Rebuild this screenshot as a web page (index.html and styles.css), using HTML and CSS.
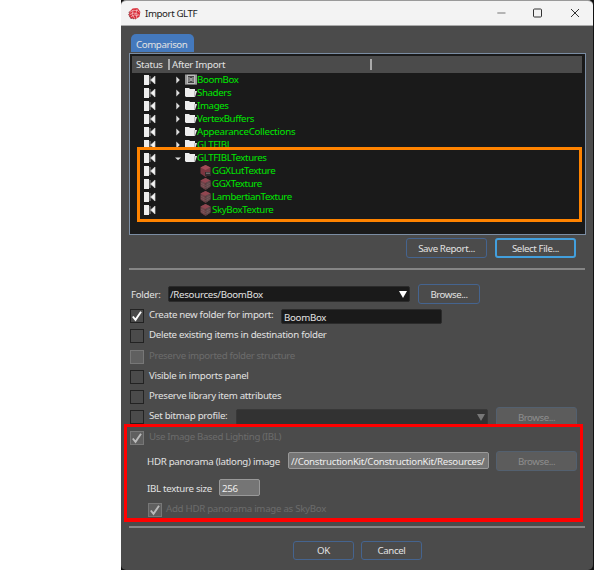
FILE: index.html
```
<!DOCTYPE html>
<html lang="en">
<head>
<meta charset="utf-8">
<title>Import GLTF</title>
<link rel="stylesheet" href="styles.css">
</head>
<body>
<svg class="defs" width="0" height="0" aria-hidden="true">
  <symbol id="state" viewBox="0 0 12 10"><path d="M0 0h5v10H0z" fill="#eee"/><path d="M6 1v8M11 1v8L6.5 5z" stroke="#ccc" stroke-width=".7" fill="#f4f4f4"/></symbol>
  <symbol id="closed" viewBox="0 0 8 8"><path d="M2.3.6 5.8 4 2.3 7.4z" fill="#ddd"/></symbol>
  <symbol id="open" viewBox="0 0 8 8"><path d="M1 3.5h6L4 6.3z" fill="#ddd"/></symbol>
  <symbol id="folder" viewBox="0 0 12 11"><path d="M0 1h4l1 1h5v2h2l-2 6H1L0 9z" fill="#eee"/><path d="M9.7 9.8V4" stroke="#777" stroke-width=".5"/></symbol>
  <symbol id="film" viewBox="0 0 12 11"><path d="M0 .5h12v10H0z" fill="#bbb"/><path d="M1 .5v10M11 .5v10" stroke="#333" stroke-dasharray="1 1"/><path d="M3 2h6v7H3z" fill="#444"/><path d="M4 3v5M8 3v5M5 4l2 3M7 4 5 7" stroke="#ccc" stroke-width=".8"/></symbol>
  <symbol id="cube" viewBox="0 0 11 12"><path d="m5.5 0 5 2.6v6L5.5 12l-5-3.4v-6z" fill="#683a40"/><path d="m5.5 0 5 2.6-5 2.3-5-2.3z" fill="#914650"/><path d="M5.5 5v7l5-3.4v-6z" fill="#553e41"/><path d="M2.1 3.4v6.2M3.8 4.2v6.4M7.2 4.2v6.4M8.9 3.4v6.2M.5 5l5 2.5 5-2.5M.5 7l5 2.5 5-2.5" stroke="#8a6b6d" stroke-width=".4" fill="none"/></symbol>
  <symbol id="lut" viewBox="0 0 11 12"><path d="m5.5 0 5 2.6v6L5.5 12l-5-3.4v-6z" fill="#7b3640"/><path d="m5.5 0 5 2.6-5 2.3-5-2.3z" fill="#a34a57"/><path d="M5 7h6v4H5z" fill="#352b2d"/><path d="M6 8.2h4" stroke="#999" stroke-width=".8"/></symbol>
  <symbol id="check" viewBox="0 0 12 12"><path d="m1.8 6.5 2.7 3.3L10 1.8" fill="none" stroke="currentColor" stroke-width="1.9"/></symbol>
</svg>
<main class="window">
  <header class="titlebar">
    <svg class="logo" viewBox="0 0 14 13"><path d="M5 1.2 10.5.5 13.3 5l-1 5-4 2.4-5.5-.7L.8 8 2 4z" fill="#d92c38"/><path d="M2 5.2 5.5 3l5 .4 2 2M1.5 8l3.8-2 4 .5 2.8 2M5.5 3l-1 5 3 4M10 1 8.5 6.5l1 5M3 10l4-2 4 1" fill="none" stroke="#f5d4d6" stroke-width=".7"/><path d="M1.4 4.6.8 8l2 3.7 5.5.7" fill="none" stroke="#672b31" stroke-width=".8" stroke-dasharray="1.5 1"/></svg>
    <h1><span>Import GLTF</span></h1>
    <svg class="controls" viewBox="0 0 83 10"><path d="M.3 5h8.2" stroke="#777" stroke-width="1.2"/><rect x="36.5" y="1" width="8" height="8" rx="1" fill="none" stroke="#333"/><path d="m74 1 8 8m0-8-8 8" stroke="#333" fill="none"/></svg>
  </header>
  <div class="tab"><span>Comparison</span></div>
  <section class="tree">
    <div class="tree-head"><span class="status">Status</span><span class="after">After Import</span><i class="divider"></i></div>
    <ul>
      <li><svg class="state"><use href="#state"/></svg><svg class="arrow"><use href="#closed"/></svg><svg class="kind"><use href="#film"/></svg><span>BoomBox</span></li>
      <li><svg class="state"><use href="#state"/></svg><svg class="arrow"><use href="#closed"/></svg><svg class="kind"><use href="#folder"/></svg><span>Shaders</span></li>
      <li><svg class="state"><use href="#state"/></svg><svg class="arrow"><use href="#closed"/></svg><svg class="kind"><use href="#folder"/></svg><span>Images</span></li>
      <li><svg class="state"><use href="#state"/></svg><svg class="arrow"><use href="#closed"/></svg><svg class="kind"><use href="#folder"/></svg><span>VertexBuffers</span></li>
      <li><svg class="state"><use href="#state"/></svg><svg class="arrow"><use href="#closed"/></svg><svg class="kind"><use href="#folder"/></svg><span class="loose">AppearanceCollections</span></li>
      <li><svg class="state"><use href="#state"/></svg><svg class="arrow"><use href="#closed"/></svg><svg class="kind"><use href="#folder"/></svg><span>GLTFIBL</span></li>
      <li><svg class="state"><use href="#state"/></svg><svg class="arrow"><use href="#open"/></svg><svg class="kind"><use href="#folder"/></svg><span>GLTFIBLTextures</span></li>
      <li class="child"><svg class="state"><use href="#state"/></svg><svg class="kind"><use href="#lut"/></svg><span>GGXLutTexture</span></li>
      <li class="child"><svg class="state"><use href="#state"/></svg><svg class="kind"><use href="#cube"/></svg><span>GGXTexture</span></li>
      <li class="child"><svg class="state"><use href="#state"/></svg><svg class="kind"><use href="#cube"/></svg><span>LambertianTexture</span></li>
      <li class="child"><svg class="state"><use href="#state"/></svg><svg class="kind"><use href="#cube"/></svg><span>SkyBoxTexture</span></li>
    </ul>
    <div class="mark mark-orange"></div>
  </section>
  <div class="actions"><button class="save"><span>Save Report...</span></button><button class="primary"><span>Select File...</span></button></div>
  <hr>
  <form class="options">
    <div class="row r-folder"><span class="lbl">Folder:</span><div class="field combo"><span>/Resources/BoomBox</span><svg viewBox="0 0 8 7"><path d="M0 0h8L4 7z" fill="#fff"/></svg></div><button type="button" class="browse"><span>Browse...</span></button></div>
    <div class="row r-create"><i class="box"><svg><use href="#check"/></svg></i><span class="lbl">Create new folder for import:</span><div class="field name"><span>BoomBox</span></div></div>
    <div class="row r-delete"><i class="box"></i><span class="lbl">Delete existing items in destination folder</span></div>
    <div class="row r-structure disabled"><i class="box"></i><span class="lbl">Preserve imported folder structure</span></div>
    <div class="row r-visible"><i class="box"></i><span class="lbl">Visible in imports panel</span></div>
    <div class="row r-attrs"><i class="box"></i><span class="lbl">Preserve library item attributes</span></div>
    <div class="row r-bitmap"><i class="box"></i><span class="lbl">Set bitmap profile:</span><div class="field combo off"><svg viewBox="0 0 8 7"><path d="M0 0h8L4 7z" fill="#777"/></svg></div><button type="button" class="browse" disabled><span>Browse...</span></button></div>
    <div class="row r-ibl disabled"><i class="box"><svg><use href="#check"/></svg></i><span class="lbl">Use Image Based Lighting (IBL)</span></div>
    <div class="row r-hdr"><span class="lbl">HDR panorama (latlong) image</span><div class="field light"><span>//ConstructionKit/ConstructionKit/Resources/</span></div><button type="button" class="browse" disabled><span>Browse...</span></button></div>
    <div class="row r-size"><span class="lbl">IBL texture size</span><div class="field light"><span>256</span></div></div>
    <div class="row r-sky disabled"><i class="box"><svg><use href="#check"/></svg></i><span class="lbl">Add HDR panorama image as SkyBox</span></div>
    <div class="mark mark-red"></div>
  </form>
  <hr>
  <footer><button class="ok"><span>OK</span></button><button class="cancel"><span>Cancel</span></button></footer>
</main>
</body>
</html>
```
FILE: styles.css
```
* { box-sizing: border-box; }
body { margin: 0; width: 594px; height: 570px; overflow: hidden; background: linear-gradient(90deg, #fff 121px, #111 121px); font: 9.7px/13px "Noto Sans", "Open Sans", sans-serif; letter-spacing: -.28px; color: #e2e2e2; }
.defs { display: block; position: absolute; }
.window { width: 472px; height: 570px; margin-left: 121px; background: #4b4b4b; border-radius: 5px; overflow: hidden; border-top: 1px solid #999; display: flex; flex-direction: column; }
span { white-space: nowrap; }
svg { display: block; flex: none; }
.titlebar { height: 25px; flex: none; background: #f3f3f3; border-bottom: 1px solid #aaa; display: flex; align-items: center; padding: 0 13px 0 7px; color: #222; }
.logo { width: 13px; height: 13px; }
h1 { font: inherit; letter-spacing: -.4px; margin: 0 auto 0 4px; }
.controls { width: 83px; height: 10px; overflow: visible; }
.tab { width: 63px; height: 18px; flex: none; margin: 8px 0 0 10px; background: #4479bd; border-radius: 5px 5px 0 0; padding: 4px 0 0 5px; letter-spacing: -.4px; }
.tree { position: relative; width: 457px; height: 182px; flex: none; margin: 1px 0 0 8px; border: 1px solid #7b8da3; background: #1a1a1a; padding: 2px; }
.tree-head { height: 17px; background: #4b4b4b; display: flex; align-items: center; padding-left: 4px; margin-right: 1px; }
.status { width: 32px; }
.after { border-left: 2px solid #aaa; line-height: 11px; padding-left: 2px; width: 202px; }
.divider { height: 11px; width: 2px; background: #aaa; }
ul { list-style: none; margin: 0; padding: 0 0 0 12px; color: #00e800; letter-spacing: -.38px; }
li { display: flex; align-items: center; height: 13px; }
.loose { letter-spacing: -.27px; }
.state { width: 12px; height: 10px; }
.arrow { width: 8px; height: 8px; margin-left: 18px; }
.kind { width: 12px; height: 11px; margin-left: 3px; }
.child .kind { width: 11px; height: 12px; margin: 0 1px 0 44px; }
.mark { position: absolute; pointer-events: none; }
.mark-orange { left: 7px; top: 93px; width: 445px; height: 75px; border: 3px solid #ff8300; }
.mark-red { left: 3px; top: 154px; width: 459px; height: 98px; border: 3px solid #f00; border-bottom-width: 4px; }
button { font: inherit; letter-spacing: -.4px; color: #e2e2e2; background: #4b4b4b; border: 1px solid #45648f; border-radius: 3px; padding: 0; height: 20px; flex: none; display: flex; align-items: center; justify-content: center; }
.browse { letter-spacing: -.45px; }
button:disabled { background: #5c5c5c; border-color: #53606f; color: #8e8e8e; }
.actions { display: flex; gap: 8px; margin: 3px 0 0 285px; height: 20px; flex: none; }
.actions button { width: 81px; }
.actions .primary { border: 2px solid #429fdd; }
hr { width: 456px; height: 2px; flex: none; border: 0; background: #858585; margin: 10px 0 0 8px; }
.options { position: relative; flex: none; height: 246px; display: flex; flex-direction: column; }
.row { display: flex; align-items: flex-start; flex: none; height: 20px; margin-left: 9px; }
.box { width: 14px; height: 14px; flex: none; border: 1px solid #222; margin-right: 5px; color: #fff; }
.box svg { width: 12px; height: 12px; }
.disabled .box { background: #606060; border-color: #777; color: #bbb; }
.disabled .lbl { color: #6b6b6b; }
.field { flex: none; background: #1a1a1a; border: 1px solid #2b2b2b; border-radius: 2px; height: 16px; display: flex; align-items: center; }
.combo { justify-content: space-between; padding-right: 2px; }
.combo svg { width: 8px; height: 7px; }
.field.off { background: #323232; border-color: #383838; justify-content: flex-end; }
.field.light { background: #757575; border-color: #999; padding: 1px 0 0 2px; color: #eee; }
.r-folder { margin-top: 14px; height: 25px; margin-left: 10px; }
.r-folder .lbl { width: 37px; padding-top: 4px; }
.r-folder .field { width: 242px; margin: 2px 8px 0 0; padding-left: 1px; }
.r-folder .browse { width: 62px; }
.r-create .lbl { width: 132px; margin-top: -1px; }
.r-create .name { width: 161px; height: 15px; padding: 1px 0 0 2px; }
.r-delete .lbl, .r-structure .lbl, .r-visible .lbl, .r-attrs .lbl { margin-top: -1px; }
.r-structure .lbl { letter-spacing: -.36px; }
.r-delete { height: 21px; }
.r-bitmap { height: 21px; }
.r-bitmap .lbl { width: 87px; margin-top: -1px; }
.r-bitmap .field { width: 252px; margin: -1px 8px 0 0; }
.r-bitmap .browse, .r-hdr .browse { width: 81px; }
.r-bitmap .browse { margin-top: -3px; }
.r-ibl .lbl { margin-top: -1px; letter-spacing: -.34px; }
.r-hdr { margin-left: 26px; height: 28px; }
.r-hdr .lbl { width: 141px; padding-top: 4px; }
.r-hdr .field { width: 201px; height: 17px; margin: 1px 7px 0 0; }
.r-hdr .field span { width: 196px; overflow: hidden; }
.r-size { margin-left: 26px; height: 24px; }
.r-size .lbl { width: 72px; padding-top: 3px; }
.r-size .field { width: 41px; height: 17px; }
.r-sky { margin-left: 27px; }
.r-sky .box { margin-right: 4px; }
.r-sky .lbl { margin-top: -1px; }
footer { display: flex; gap: 7px; margin: 13px 0 0 172px; }
footer button { width: 61px; height: 19px; }
```
